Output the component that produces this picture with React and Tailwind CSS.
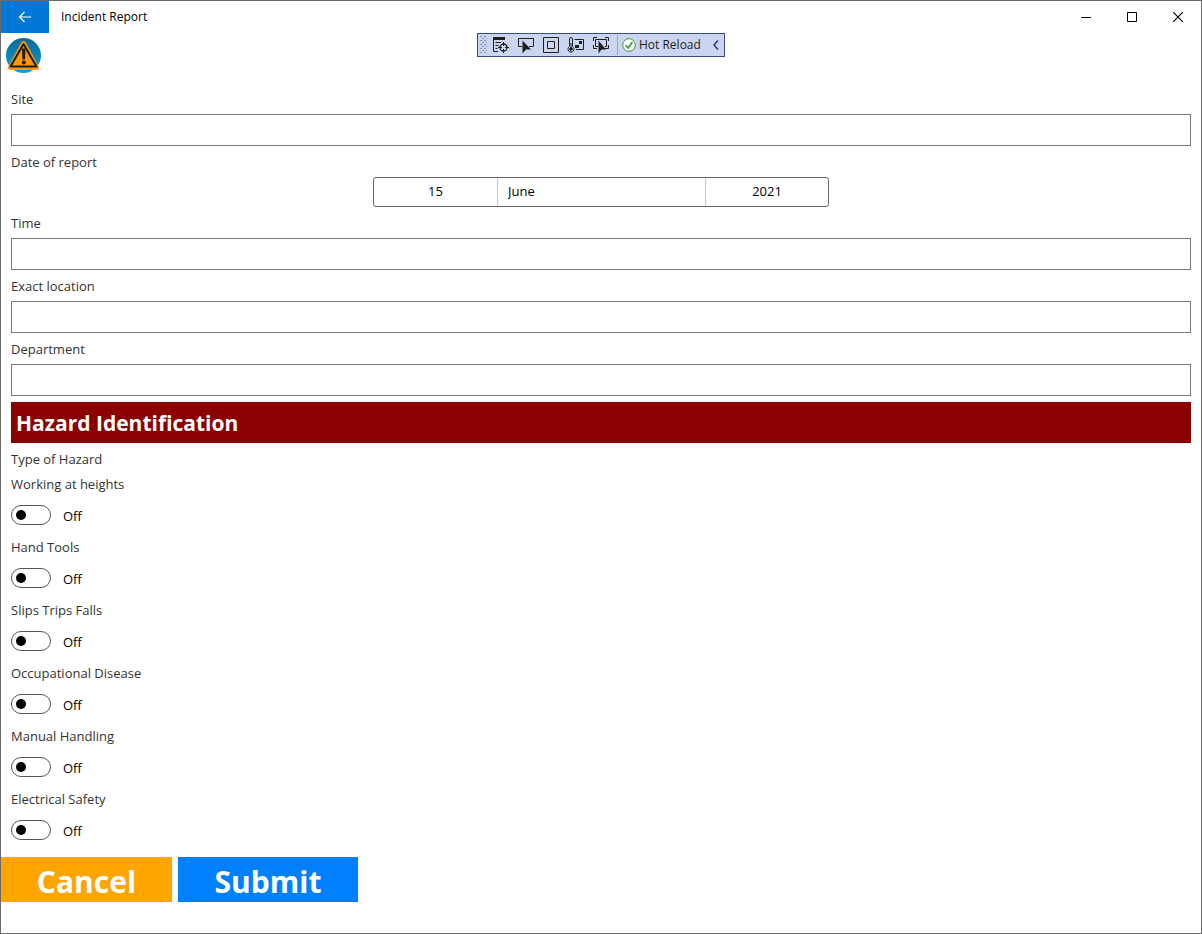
import React, { useState } from 'react';

const hazards = [
  'Working at heights',
  'Hand Tools',
  'Slips Trips Falls',
  'Occupational Disease',
  'Manual Handling',
  'Electrical Safety',
];

const months = [
  'January', 'February', 'March', 'April', 'May', 'June',
  'July', 'August', 'September', 'October', 'November', 'December',
];
const days = Array.from({ length: 31 }, (_, i) => String(i + 1));
const years = Array.from({ length: 21 }, (_, i) => String(2011 + i));

const TitleBar = () => (
  <header className="flex h-8 items-stretch">
    <button aria-label="Back" className="flex w-12 items-center justify-center bg-[#0078d7] text-white">
      <svg width="14" height="12" viewBox="0 0 14 12" fill="none" stroke="currentColor" strokeWidth="1.2">
        <path d="M13 6H1.5M6.5 1L1.5 6l5 5" />
      </svg>
    </button>
    <h1 className="flex-1 self-center pl-3 text-[12px] leading-4 text-black">Incident Report</h1>
    <button aria-label="Minimize" className="flex w-[46px] items-center justify-center">
      <svg width="10" height="10" shapeRendering="crispEdges"><path d="M0 5.5h10" stroke="#000" /></svg>
    </button>
    <button aria-label="Maximize" className="flex w-[46px] items-center justify-center">
      <svg width="10" height="10" fill="none" stroke="#000"><path d="M.5.5h9v9h-9z" /></svg>
    </button>
    <button aria-label="Close" className="flex w-[46px] items-center justify-center">
      <svg width="10" height="10" stroke="#000" strokeWidth="1.1"><path d="M0 0l10 10M10 0L0 10" /></svg>
    </button>
  </header>
);

const ToolButton = ({ label, children }) => (
  <button aria-label={label} className="flex h-full w-[25px] shrink-0 items-center justify-center">
    <svg width="17" height="18" viewBox="0 0 17 18" fill="none" stroke="#1e1e1e" className="shrink-0">
      {children}
    </svg>
  </button>
);

// Debugger toolbar, floats over the top of the window
const DebugToolbar = () => (
  <div className="absolute top-8 left-1/2 flex h-6 w-[248px] -translate-x-1/2 items-center border border-[#3b4a8c] bg-[#ccd5f0]">
    <svg width="10" height="18" viewBox="0 0 10 18" className="shrink-0 fill-[#8391bb]" shapeRendering="crispEdges">
      {[0, 4, 8, 12, 16].map((y) => (
        <path key={y} d={`M2 ${y}h2v1h-2zM6 ${y}h2v1h-2zM4 ${y + 2}h2v1h-2zM8 ${y + 2}h1v1h-1z`} />
      ))}
    </svg>
    <ToolButton label="Go to Live Visual Tree">
      <path d="M1 2.5h12" strokeWidth="3" />
      <path d="M1.5 3v12.500H6M3.500 6.500H9M3.500 9.500h3M3.500 12.500h2" />
      <circle cx="11.500" cy="11.500" r="3.500" strokeWidth="1.300" />
      <path d="M11.500 6v4M11.500 13v4M6 11.500h4M13 11.500h4" />
    </ToolButton>
    <ToolButton label="Select Element">
      <path d="M5 10.500H1.500v-8h15v8H12" />
      <path d="M5.500 4.500v13l3.500-4h5z" fill="#1e1e1e" stroke="none" />
    </ToolButton>
    <ToolButton label="Display Layout Adorners">
      <path d="M1.500 1.500h15v15h-15zM5.500 5.500h7v7h-7z" />
    </ToolButton>
    <ToolButton label="Track Focused Element">
      <path d="M2.500 10.500V3a1.500 1.500 0 013 0v7.500a3 3 0 11-3 0z" />
      <path d="M4 7v5" />
      <circle cx="4" cy="13" r="1.300" fill="#1e1e1e" />
      <path d="M7.500 3.500h9v10H9" />
      <path d="M12 5h3v3h-3zM8 9h4v3H8z" fill="#1e1e1e" stroke="none" />
    </ToolButton>
    <ToolButton label="Scroll Into View">
      <path d="M1.500 5V1.500H5M13 1.500h3.500V5M1.500 9v3.500H5M16.500 9v3.500H13" />
      <path d="M6 10.500H3.500v-7h11v7H13" />
      <path d="M6.500 4.500v13l3-4H14z" fill="#1e1e1e" stroke="none" />
    </ToolButton>
    <span className="mx-1 h-5 w-px shrink-0 bg-[#9aa8d0]" />
    <button className="flex h-full flex-1 items-center gap-[3px] text-[12px] leading-4 whitespace-nowrap text-[#1e1e1e]">
      <svg width="14" height="14" viewBox="0 0 14 14" fill="#fff" stroke="#339933" className="shrink-0">
        <circle cx="7" cy="7" r="6.300" />
        <path d="M3.500 7.200l2.500 2.800 4.500-6" fill="none" strokeWidth="1.700" />
      </svg>
      Hot Reload
    </button>
    <button aria-label="Collapse toolbar" className="flex h-full w-4 shrink-0 items-center justify-center">
      <svg width="6" height="10" viewBox="0 0 6 10" fill="none" stroke="#2b3a75" strokeWidth="1.500">
        <path d="M5 .5L1 5l4 4.500" />
      </svg>
    </button>
  </div>
);

const Logo = () => (
  <svg width="36" height="36" viewBox="0 0 36 36" className="mt-[5px] ml-[5px]">
    <defs>
      <linearGradient id="disc" x1="0" y1="0" x2="0" y2="1">
        <stop offset="0" stopColor="#0a6a98" />
        <stop offset="1" stopColor="#0d9fd6" />
      </linearGradient>
    </defs>
    <circle cx="17.500" cy="17.500" r="17.500" fill="url(#disc)" />
    <path d="M17.500 5.500L4.500 29.500h26z" fill="#ff960a" stroke="#ff960a" strokeWidth="5" strokeLinejoin="round" />
    <path d="M17.500 6L4.500 28.500h26z" fill="none" stroke="#1c1c1c" strokeWidth="2" strokeLinejoin="round" />
    <path d="M16 10.500h3.500l-.5 11h-2.500z" fill="#1c1c1c" />
    <circle cx="17.800" cy="24.500" r="2" fill="#1c1c1c" />
  </svg>
);

const TextField = ({ id, label }) => {
  const [value, setValue] = useState('');
  return (
    <div className="flex flex-col gap-1.5">
      <label htmlFor={id} className="pt-0.5 leading-[17px]">{label}</label>
      <input
        id={id}
        type="text"
        value={value}
        onChange={(e) => setValue(e.target.value)}
        className="h-8 w-full border border-[#7a7a7a] bg-white px-2 text-black outline-none focus:border-[#0078d7]"
      />
    </div>
  );
};

const DateField = () => {
  const [day, setDay] = useState('15');
  const [month, setMonth] = useState('June');
  const [year, setYear] = useState('2021');

  return (
    <fieldset className="flex flex-col">
      <legend className="mb-1.5 pt-0.5 leading-[17px]">Date of report</legend>
      <div className="mx-auto grid h-[30px] w-full max-w-[456px] grid-cols-[124fr_208fr_122fr] divide-x divide-[#c8c8c8] rounded-[3px] border border-[#666] text-black">
        <select aria-label="Day" value={day} onChange={(e) => setDay(e.target.value)} className="appearance-none text-center outline-none">
          {days.map((d) => <option key={d}>{d}</option>)}
        </select>
        <select aria-label="Month" value={month} onChange={(e) => setMonth(e.target.value)} className="appearance-none pl-2.5 outline-none">
          {months.map((m) => <option key={m}>{m}</option>)}
        </select>
        <select aria-label="Year" value={year} onChange={(e) => setYear(e.target.value)} className="appearance-none text-center outline-none">
          {years.map((y) => <option key={y}>{y}</option>)}
        </select>
      </div>
    </fieldset>
  );
};

const HazardSwitch = ({ id, label }) => {
  const [on, setOn] = useState(false);
  return (
    <div className="flex flex-col gap-1.5">
      <label htmlFor={id} className="pt-0.5 leading-[17px]">{label}</label>
      <div className="flex h-8 items-center gap-3">
        <input
          id={id}
          type="checkbox"
          role="switch"
          checked={on}
          onChange={(e) => setOn(e.target.checked)}
          className="flex h-5 w-10 appearance-none items-center rounded-full border border-[#555] px-1 before:size-2.5 before:rounded-full before:bg-black checked:justify-end checked:border-[#0078d7] checked:bg-[#0078d7] checked:before:bg-white"
        />
        <span className="pt-1 text-black">{on ? 'On' : 'Off'}</span>
      </div>
    </div>
  );
};

const App = () => {
  return (
    <div className="relative min-h-screen border border-[#6b6b6b] bg-white font-['Open_Sans','Noto_Sans',sans-serif] text-[13px] text-[#333]">
      <TitleBar />
      <DebugToolbar />
      <Logo />
      <main className="mt-[15px] flex flex-col gap-1.5 px-2.5">
        <TextField id="site" label="Site" />
        <DateField />
        <TextField id="time" label="Time" />
        <TextField id="location" label="Exact location" />
        <TextField id="department" label="Department" />
        <h2 className="bg-[#8b0000] px-[5px] pt-0.5 text-[21px] leading-[39px] font-bold text-white">Hazard Identification</h2>
        <p className="pt-0.5 leading-[17px]">Type of Hazard</p>
        {hazards.map((hazard, i) => (
          <HazardSwitch key={hazard} id={`hazard-${i}`} label={hazard} />
        ))}
      </main>
      <div className="mt-[11px] flex gap-1.5 text-[30px] font-bold text-white">
        <button className="w-[171px] bg-[#ffa500] pt-1 leading-[41px]">Cancel</button>
        <button className="w-[180px] bg-[#0080ff] pt-1 leading-[41px]">Submit</button>
      </div>
    </div>
  );
};

export default App;
